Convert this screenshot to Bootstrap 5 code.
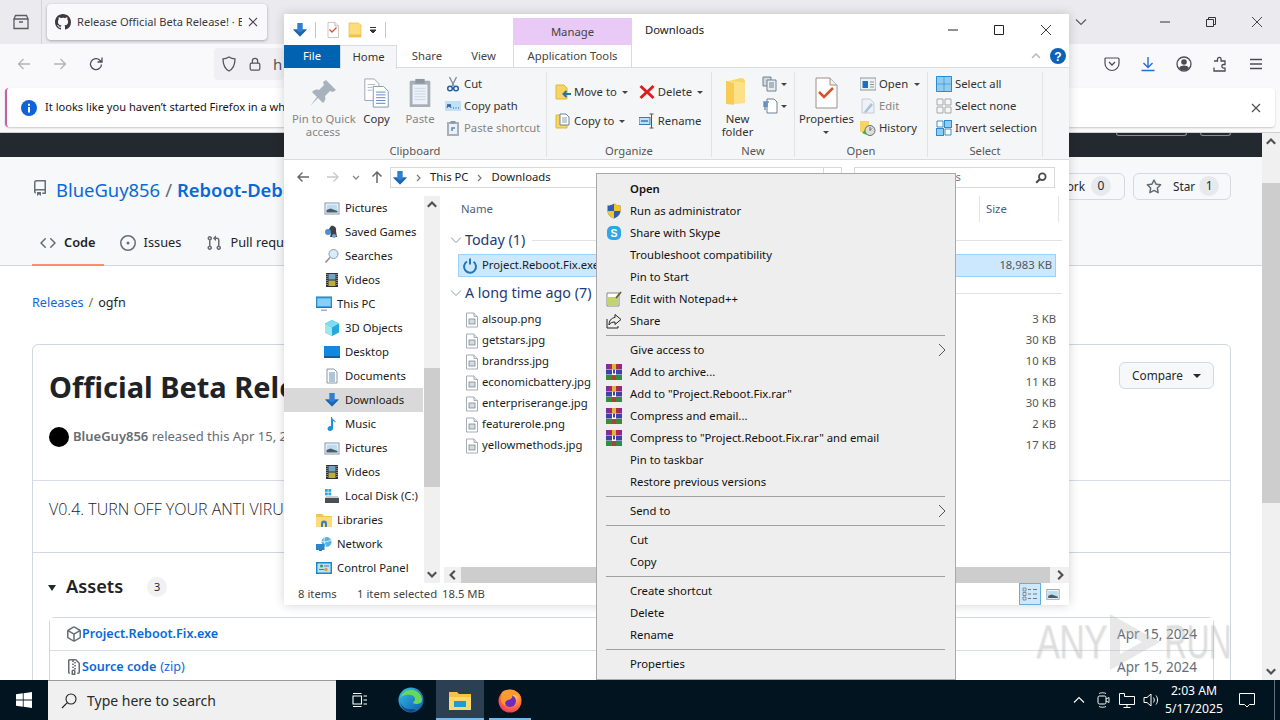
<!doctype html>
<html lang="en"><head><meta charset="utf-8"><title>Downloads</title>
<link href="https://cdn.jsdelivr.net/npm/bootstrap@5.3.0/dist/css/bootstrap.min.css" rel="stylesheet">
<style>
:root{--ui:"Noto Sans","Open Sans",sans-serif}
html,body{height:720px;overflow:hidden}
body{font-family:var(--ui);font-size:14px;color:#1f2328;background:#fff;position:relative;width:1280px}
svg{display:block;flex:none}
.svgdefs{position:absolute}
.h44{height:44px}
/* browser */
.ff{height:680px;overflow:hidden;background:#fff}
.ff-tabs{height:44px;background:#ebebef}
.ff-ic-slot{width:42px;border-right:1px solid #d4d4d8;height:44px}
.ff-tab{margin:4px 0 4px 5px;width:220px;height:36px;background:#f9f9fb;border-radius:4px;box-shadow:0 1px 3px rgba(0,0,0,.3);padding:0 8px;font-size:11.1px;color:#3a3a40;white-space:nowrap;overflow:hidden}
.ff-tab-title{width:167px;overflow:hidden;margin-left:6px;margin-right:5px}
.ff-chev{margin-left:799px;width:30px}
.ff-win{width:46px}
.ff-bar{height:44px;background:#f9f9fb;padding-bottom:4px}
.ff-btn{width:36px}
.ff-btn2{margin-left:2px}
.ff-url{margin-left:100px;height:32px;width:70px;background:#f0f0f4;border-radius:4px;padding-left:7px;gap:11px;color:#55555c;font-size:15px}
.ff-right{margin-left:auto;padding-right:6px;gap:0}
.ff-right span{width:36px;display:flex;justify-content:center}
.ff-notebar{height:45px;background:#f9f9fb;padding:0 5px;border-bottom:1px solid #cfcfd8}
.ff-note{height:39px;background:#fff;border-radius:4px;box-shadow:0 1px 2px rgba(0,0,0,.2);border-left:2px solid #c85fa0;padding-left:14px;padding-right:13px;font-size:11.1px;white-space:nowrap;color:#15141a}
.ff-note-txt{margin-left:8px}
.gh{height:547px}
.gh-main{width:1262px;overflow:hidden}
.gh-dark{height:24px;background:#24292f;gap:13px;padding-right:31px}
.gh-dark span{height:3px;border:1px solid #8b8f94;border-top:0;border-radius:0 0 4px 4px}
.gh-d1{width:71px}.gh-d2{width:31px}
.gh-head{height:109px;background:#f6f8fa;border-bottom:1px solid #d0d7de}
.gh-top{height:60px;padding:16px 31px 0 32px}
.gh-repo-ic{margin-top:7px}
.gh-repo{font-size:18.4px;white-space:nowrap;margin:3px 0 0 8px;color:#0969da}
.gh-repo a{color:#0969da;text-decoration:none}
.gh-repo b{font-weight:600}
.gh-repo i{color:#656d76;font-style:normal;margin:0 5px}
.gh-btn{height:27px;background:#f6f8fa;border:1px solid #d5d9de;border-radius:6px;font-size:11.8px;color:#24292f;padding:0;position:relative}
.gh-fork{width:80px;margin-left:auto;padding-right:13px;gap:6px}
.gh-star{width:98px;margin-left:8px;padding-left:12px}
.gh-star-t{margin:0 4px 0 11px}
.gh-count{background:#e7eaed;color:#24292f;font-weight:400;font-size:12px;width:20px;height:20px;padding:0;line-height:20px;border-radius:10px}
.gh-tabs{padding-left:32px;gap:8px;height:49px;margin:0}
.gh-tab{height:49px;padding:3px 8px 0;gap:8px;color:#1f2328;font-size:12.8px;white-space:nowrap}
.gh-tab.on{font-weight:600;border-bottom:2px solid #fd8c73;padding-top:5px}
.gh-tab.pr{margin-left:1px}
.gh-crumb{margin:27px 0 0 32px;height:20px;line-height:20px;font-size:12.6px;color:#1f2328}
.gh-crumb a{color:#0969da;text-decoration:none}
.gh-crumb i{color:#656d76;font-style:normal;margin:0 5px}
.gh-card{width:1199px;margin:31px 0 0 32px;border:1px solid #d0d7de;border-radius:6px;display:block;background:#fff;height:500px}
.gh-titlebar{height:44px;margin:20px 16px 0 16px}
.gh-title{font-size:29px;font-weight:700;margin:0;line-height:44px;color:#1f2328;white-space:nowrap}
.gh-cmp{width:95px;height:27px;background:#f6f8fa;border:1px solid #d5d9de;border-radius:6px;font-size:11.8px;margin:-3px 0 0 auto;padding:0 10px;color:#24292f;gap:10px}
.gh-cmp::after{content:"";border:4px solid transparent;border-top-color:#24292f;border-bottom:0}
.gh-author{height:24px;margin:16px 16px 0;font-size:13px;color:#656d76;white-space:nowrap}
.gh-av{width:20px;height:20px;background:#000;border-radius:50%;margin-right:4px}
.gh-author b{font-weight:600}
.gh-rule{margin:31px 16px 0;border-top:1px solid #d8dee4;opacity:1}
.gh-body{margin:16px 16px 0;height:24px;line-height:24px;font-size:16px;font-weight:300;color:#1f2328;white-space:nowrap;font-family:"Open Sans",sans-serif}
.gh-sect{border-top:1px solid #d0d7de;margin-top:31px;padding:20px 16px 0}
.gh-assets{height:28px}
.gh-tri{width:0;height:0;border:4px solid transparent;border-top:6px solid #24292f;border-bottom:0;margin:1px 10px 0 -1px}
.gh-assets b{font-size:18.2px;font-weight:600;margin-right:24px}
.gh-assets .gh-count{font-size:11px;background:#eff1f3}
.gh-list{margin-top:16px;border:1px solid #d0d7de;border-radius:6px}
.gh-row{height:33px;padding:0 16px;gap:0;font-size:12.6px;border-bottom:1px solid #d8dee4;background:#fff}
.gh-row a{color:#0969da;font-weight:600;text-decoration:none;white-space:nowrap}
.gh-zip{color:#0969da;margin-left:4px}
.gh-date{margin-left:auto;color:#656d76;font-size:13.6px}
.gh-sb{width:18px;background:#f0f0f0}
.gh-sb-up{height:18px}
.gh-thumb{height:320px;background:#cdcdcd;margin-top:32px}
.gh-sb-dn{margin-top:auto;height:18px}
.wm{left:1036px;top:609px;width:200px;height:66px;color:rgba(195,195,195,.32);font:48px/66px "Liberation Sans",sans-serif;letter-spacing:-1px;white-space:nowrap;text-shadow:1px 1px 2px rgba(150,150,150,.2);z-index:5;pointer-events:none}
.wm span{display:inline-block;transform:scaleX(.74);transform-origin:left}
.wm svg{position:absolute;left:68px;top:1px}
.wm .r{position:absolute;left:128px;top:0;transform:scaleX(.66)}
/* explorer */
.xp{left:284px;top:14px;width:785px;height:591px;background:#fff;font-size:11.3px;color:#1b1b1b;box-shadow:0 0 10px rgba(0,0,0,.18);z-index:2;white-space:nowrap}
.xp-title{height:31px}
.xp-qa{width:229px;padding-left:8px;gap:0}
.xp-vsep{width:1px;height:16px;background:#c6c6c6}
.q1{margin:0 9px 0 7px}.q2{margin-left:7px}.q3{margin-left:7px}.q4{margin-left:8px}
.xp-manage{width:119px;height:27px;margin-top:4px;background:#e9c9f6;text-align:center;line-height:27px;color:#444}
.xp-doc{padding:1px 0 0 13px;color:#1b1b1b}
.xp-wb{width:46.5px;height:31px}
.xp-tabs{height:23px;border-bottom:1px solid #dadbdc;line-height:22px;position:relative}
.xp-tab{text-align:center;color:#444}
.xp-file{width:56px;background:#0063b1;color:#fff;height:23px}
.xp-home{width:57px;height:24px;background:#f5f6f7;border:1px solid #dadbdc;border-bottom:0;z-index:1;margin-top:0;color:#333}
.xp-share{width:60px}.xp-view{width:53px;margin-right:3px}
.xp-app{width:119px;border-left:1px solid #dadbdc;border-right:1px solid #dadbdc}
.xp-help{margin-left:auto;padding-right:3px;gap:8px}
.xp-rib{height:92px;background:#f5f6f7;border-bottom:1px solid #dadbdc;color:#333}
.xp-grp{position:relative;border-right:1px solid #e2e3e4;margin:4px 0 2px;height:85px;padding-top:0}
.xp-grp-c{height:68px}
.xp-lbl{position:absolute;left:0;right:0;bottom:-1px;text-align:center;line-height:14px;color:#565656;font-size:11.2px}
.g1{width:263px;padding-left:8px}.g2{width:165px;padding-left:8px}.g3{width:83px}.g4{width:133px}.g5{width:115px}
.big{padding-top:2px;text-align:center;line-height:13px}
.big svg{margin:0 auto}
.big-ic{height:38px;display:flex;align-items:center;justify-content:center}
.dis{color:#858585}
.w62{width:62px}.w44{width:45px}.w42{width:42px}.w41{width:41px}.w53{width:53px}
.smalls{margin-left:4px;padding-top:1px}
.smalls>div{height:22px;gap:3px}
.smalls .sic{width:16px;display:flex;justify-content:center}
.sm-new{margin-left:4px}
.sm-new>div{gap:0}
.g3p{padding-left:5px}
.cr{width:0;height:0;border:3px solid transparent;border-top:3px solid #444;border-bottom:0;display:inline-block;margin-left:3px;vertical-align:2px}
.org{padding-top:5.5px;gap:11px}
.org-col>div{height:29px;gap:2px}
.org-col svg{margin-right:1px}
.xp-addr{height:32px;padding-top:7px;padding-left:4px}
.xp-nav-ic{width:30px;display:flex;justify-content:center;height:16px;margin-top:3px}
.xp-nav-c{width:16px}.xp-nav-u{width:26px}
.xp-addrbox{width:452px;height:21px;border:1px solid #d9d9d9;padding-left:1px;gap:0;justify-content:flex-start}
.xp-addrdiv{margin-left:auto;width:18px;height:19px;border-left:1px solid #d9d9d9}
.xp-srch{margin-left:12px;width:201px;height:21px;border:1px solid #d9d9d9;padding:0 6px 0 8px;color:#777}
.xp-sep{color:#777;margin:0 9px 0 8px}
.xp-sep1{margin:0 8px}
.xp-body{height:391px}
.xp-pane{width:156px;padding-top:4px}
.xp-list{width:140px;overflow:hidden}
.xp-it{height:24px;gap:5px;padding-left:40px;overflow:hidden;width:139px}
.xp-it.l1{padding-left:32px}
.xp-it svg{width:16px;height:16px}
.xp-it.sel{background:#d9d9d9}
.xp-vs{width:16px;background:#f0f0f0;height:387px}
.xp-vs-a{height:18px;display:flex;align-items:center;justify-content:center}
.xp-vs-t{height:119px;background:#cdcdcd;margin-top:154px}
.xp-vs-b{margin-top:auto;height:18px;display:flex;align-items:center;justify-content:center}
.xp-cnt{width:628px;margin-left:1px;padding-top:4px}
.xp-hdr{height:26px;color:#4c607a}
.xp-hn{width:538px;padding-left:20px}
.xp-hs{width:80px;height:26px;border-left:1px solid #e5e5e5;border-right:1px solid #e5e5e5;padding-left:6px}
.xp-g{height:24px;margin-top:6px;padding-left:10px;font-size:14.3px;color:#1e3a78;gap:4px}
.xp-g::after{content:"";flex:1;height:1px;background:#e2e2e2;margin:0 7px 0 3px}
.xp-gs{margin-top:4px;height:24px}
.xp-row{height:21px;margin-left:22px;width:596px;padding-left:1px}
.xp-row .n{margin-left:2px;flex:1}
.xp-row .s{margin-right:3px;color:#555}
.xp-row.sel{height:23px;background:#cce8ff;border:1px solid #99d1ff;margin-left:17px;width:598px;margin-top:2px;padding-left:3px}
.xp-row.sel .n{margin-left:4px}
.xp-row.first{margin-top:4px}
.xp-hsb{height:16px;margin-top:auto;margin-left:3px;background:#f0f0f0}
.xp-hsb-a{width:17px;display:flex;align-items:center;justify-content:center}
.xp-hsb-t{flex:1;background:#cdcdcd}
.xp-hsb-b{width:19px;display:flex;align-items:center;justify-content:center}
.xp-stat{height:22px;color:#444;padding-left:14px}
.xp-stat .a{width:59px}.xp-stat .b{width:85px}
.xp-views{margin-left:auto;padding-right:6px;gap:0}
.xp-v1{width:22px;height:22px;background:#cce8ff;border:1px solid #60b0e0;display:flex;align-items:center;justify-content:center;margin-right:2px}
.xp-v2{width:20px;display:flex;justify-content:center}
/* menu */
.ctx.dropdown-menu{left:596px;top:173px;width:360px;height:507px;margin:0;padding:4px 0 0;background:#eeeeee;border:1px solid #a9a9a9;border-radius:0;z-index:4;display:block;min-width:0}
.ctx .dropdown-item{height:22px;padding:0 0 0 5px;color:#111;background:transparent;font-size:11.3px;white-space:nowrap}
.ctx .dropdown-divider{margin:3px 10px 3px 9px;border-top:1px solid #a0a0a0;opacity:1}
.ctx-ic{width:24px;margin-right:4px;display:flex;justify-content:center}
.ctx .arr{margin-left:auto;margin-right:9px}
.ctx b{font-weight:600}
/* taskbar */
.tb{height:40px;background:#02141f;position:relative;z-index:6}
.tb-start{width:48px}
.tb-search{width:288px;height:40px;background:#f0f0f0;border-top:1px solid #9a9a9a;padding-left:13px;gap:10px;font-size:14px;color:#2a2a2a;font-family:var(--ui)}
.tb-app{width:48px;height:40px;position:relative}
.tb-a1{margin-left:3px}.tb-a2{margin-left:1px}.tb-a3{margin-left:2px}
.tb-act{background:#2b4153}
.tb-run::after{content:"";position:absolute;left:0;right:0;bottom:0;height:2px;background:#76b9ed}
.tb-run2::after{content:"";position:absolute;left:3px;right:3px;bottom:0;height:2px;background:#76b9ed}
.tb-view{margin-left:0;width:48px}
.tb-tray{margin-left:auto;gap:0}
.tb-s{width:24px;display:flex;justify-content:center}
.tb-clock{width:62px;text-align:center;color:#fff;font-size:12.2px;line-height:18px}
.tb-note{width:48px;display:flex;justify-content:center;margin:0 3px 0 -2px}
.tb-line{width:6px;height:40px;border-left:1px solid #667079}
</style></head>
<body>
<svg width="0" height="0" class="svgdefs">
<defs>
<symbol id="dn" viewBox="0 0 16 16"><path d="M5.300 1h5.400v6.500h4.200L8 14.500 1.100 7.500h4.200z" fill="#2f80d0"/><path d="M8 14.500 1.100 7.500h4.200V9q2.700 2 5.400 0V7.500h4.200z" fill="#1e66b0"/></symbol>
<symbol id="file" viewBox="0 0 16 16"><path d="M2.500 1h7.500l3.500 3.500V15H2.500z" fill="#fff" stroke="#a5adb5"/><path d="M10 1v3.500h3.500" fill="#e6e9ec" stroke="#a5adb5"/><rect x="5" y="7" width="6" height="5" fill="#d5dce0" stroke="#7e8890" stroke-width=".8"/></symbol>
<symbol id="pic" viewBox="0 0 16 16"><rect x="1" y="3" width="14" height="11" fill="#fff" stroke="#7f98ad"/><rect x="2.500" y="4.500" width="11" height="8" fill="#bcdcf0"/><path d="M2.500 12.500v-2.500l4-1.500 7 2.500v1.500z" fill="#4a5c66"/></symbol>
<symbol id="games" viewBox="0 0 16 16"><path d="M7 2c3-1 6 2 5 5l1 6H6l1-4-2 1-2-2z" fill="#3d4248"/><circle cx="4" cy="8" r="3" fill="#4a90d0"/><circle cx="10" cy="12" r="2" fill="#7aa7d0"/></symbol>
<symbol id="srch" viewBox="0 0 16 16"><circle cx="9.500" cy="6" r="4.500" fill="#d9ecfa" stroke="#8a9cab"/><path d="M6 9.500 1.500 14.500" stroke="#8d8d8d" stroke-width="1.500"/></symbol>
<symbol id="vid" viewBox="0 0 16 16"><rect x="2" y="1" width="12" height="14" fill="#333"/><rect x="4.500" y="2" width="7" height="5.500" fill="#6fa3c7"/><rect x="4.500" y="8.500" width="7" height="5.500" fill="#b8b046"/><path d="M3 2v12M13 2v12" stroke="#ccc" stroke-dasharray="1 1"/></symbol>
<symbol id="pc" viewBox="0 0 16 16"><rect x="0" y="1" width="16" height="10.500" fill="#3aa4e6" stroke="#1b79b8"/><rect x="1.500" y="2.500" width="13" height="7.500" fill="#86d0f7"/><path d="M5 13.500h6v1.500H5z" fill="#9bb3c4"/></symbol>
<symbol id="cube" viewBox="0 0 16 16"><path d="M8 0l7 3.500v9L8 16l-7-3.500v-9z" fill="#25a9dc"/><path d="M8 7.500 1 3.500 8 0l7 3.500z" fill="#7fdcf2"/><path d="M1 3.500 8 7.500V16l-7-3.500z" fill="#9ee7ee"/></symbol>
<symbol id="desk" viewBox="0 0 16 16"><rect x="0" y="2" width="16" height="12" fill="#1289dc"/><path d="M0 12h16v2H0z" fill="#0a5fa8"/></symbol>
<symbol id="doc" viewBox="0 0 16 16"><path d="M3 1h7l3 3v11H3z" fill="#fff" stroke="#8d98a3"/><path d="M5 5h6M5 7h6M5 9h6M5 11h6M5 13h6" stroke="#5a8db5"/></symbol>
<symbol id="note" viewBox="0 0 16 16"><path d="M8 1c0 3 4 3 4 6 0-1-2-2-3-2v7.500c0 1.600-1.500 2.500-3 2.500s-2.500-1-2.500-2.200S5 10 6 10c.6 0 1 .1 1 .3V1z" fill="#1e8fdc"/></symbol>
<symbol id="disk" viewBox="0 0 16 16"><rect x="1" y="10" width="14" height="5" fill="#4a4f55"/><path d="M2 8h12l1 2H1z" fill="#c9ced2"/><rect x="1" y="1" width="2.800" height="2.800" fill="#28a8e0"/><rect x="4.400" y="1" width="2.800" height="2.800" fill="#28a8e0"/><rect x="1" y="4.500" width="2.800" height="2.800" fill="#28a8e0"/><rect x="4.400" y="4.500" width="2.800" height="2.800" fill="#28a8e0"/></symbol>
<symbol id="lib" viewBox="0 0 16 16"><path d="M0 2h6l2 2h8v11H0z" fill="#f3c64f"/><path d="M0 5h16v10H0z" fill="#fbdc7a"/><path d="M5 15v-3.500a3 3 0 0 1 6 0V15H9v-3a1 1 0 0 0-2 0v3z" fill="#3d7fc0"/></symbol>
<symbol id="net" viewBox="0 0 16 16"><circle cx="10.500" cy="6" r="5" fill="#57b3e6"/><path d="M6 5.500c3 1 6 0 9-1.500M9 1c-2 3 0 7 1 10" stroke="#d9f0fb" fill="none"/><rect x="0" y="8" width="8.500" height="6" fill="#2b86c9"/><path d="M3 14.500h3" stroke="#666"/></symbol>
<symbol id="cp" viewBox="0 0 16 16"><rect x="0" y="2" width="16" height="12" fill="#1f88c9"/><rect x="1.500" y="3.500" width="13" height="9" fill="#bfe2f3"/><circle cx="5.500" cy="6" r="1.500" fill="#2f9e5a"/><circle cx="10" cy="9.500" r="1.700" fill="#e0a030"/><path d="M3 9.500h5M8 6h5" stroke="#3a7fb8"/></symbol>
<symbol id="chev-up" viewBox="0 0 10 10"><path d="M1.500 6.500 5 3l3.500 3.500" fill="none" stroke="#505050" stroke-width="1.800"/></symbol>
<symbol id="chev-dn" viewBox="0 0 10 10"><path d="M1.500 3.500 5 7l3.500-3.500" fill="none" stroke="#505050" stroke-width="1.800"/></symbol>
<symbol id="chev-l" viewBox="0 0 10 10"><path d="M6.500 1.500 3 5l3.500 3.500" fill="none" stroke="#505050" stroke-width="1.800"/></symbol>
<symbol id="chev-r" viewBox="0 0 10 10"><path d="M3.500 1.500 7 5 3.500 8.500" fill="none" stroke="#505050" stroke-width="1.800"/></symbol>
<symbol id="rar" viewBox="0 0 16 16"><rect x="0" y="0" width="16" height="5" fill="#b02a4a"/><rect x="0" y="5.500" width="16" height="5" fill="#4040a8"/><rect x="0" y="11" width="16" height="5" fill="#2f8f3f"/><rect x="0" y="0" width="3" height="5" fill="#7a2f9e"/><rect x="13" y="0" width="3" height="5" fill="#7a2f9e"/><path d="M6 5.500h1v4h2v-4h1v5.500H6z" fill="#fff"/><rect x="6" y="0" width="4" height="5" fill="#d8b840"/><rect x="6" y="11.500" width="4" height="4.500" fill="#b04030"/></symbol>
<symbol id="shield" viewBox="0 0 16 16"><path d="M8 .5c2 1.500 4 2 6.500 2V8c0 3.500-3 6-6.500 7.500C4.500 14 1.500 11.500 1.500 8V2.500c2.500 0 4.500-.5 6.500-2z" fill="#2c5fb0"/><path d="M8 .5c2 1.500 4 2 6.500 2V8H8zM8 8v7.500C4.500 14 1.500 11.500 1.500 8z" fill="#f5c522"/></symbol>
<symbol id="paper" viewBox="0 0 32 32"><path d="M6 1h14l7 7v23H6z" fill="#fff" stroke="#a08e8a"/><path d="M20 1v7h7" fill="#eee" stroke="#a08e8a"/><path d="M9 15l5 5 9-9" fill="none" stroke="#d5532c" stroke-width="2.500"/></symbol>
<symbol id="pin" viewBox="0 0 32 32"><path d="M19 3l10 10-3 2-3-1-5 5c1 3 0 5-2 7l-5-5-8 8 7-9-5-5c2-2 4-3 7-2l5-5-1-3z" fill="#a8b2bd"/></symbol>
<symbol id="copy" viewBox="0 0 32 32"><path d="M3 1h10l5 5v18H3z" fill="#fff" stroke="#9aa4ae"/><path d="M12 9h11l5 5v17H12z" fill="#fff" stroke="#7e96b0"/><path d="M15 15h10M15 18h10M15 21h10M15 24h10M15 27h10" stroke="#4f87c0"/><path d="M6 7h8M6 10h5M6 13h5" stroke="#b0b8c0"/></symbol>
<symbol id="paste" viewBox="0 0 32 32"><rect x="5" y="3" width="22" height="28" rx="1" fill="#a7afb8"/><rect x="8" y="7" width="16" height="21" fill="#eef2f8"/><rect x="11" y="1" width="10" height="5" fill="#8e97a0"/><path d="M10 11h12M10 14h12M10 17h12M10 20h12M10 23h12" stroke="#c8d4e2"/></symbol>
<symbol id="cut" viewBox="0 0 16 16"><path d="M4.500 1 9 10M11.500 1 7 10" stroke="#7e8a96" stroke-width="1.300"/><circle cx="5" cy="12.500" r="2.300" fill="none" stroke="#1f5fa8" stroke-width="1.500"/><circle cx="11" cy="12.500" r="2.300" fill="none" stroke="#1f5fa8" stroke-width="1.500"/></symbol>
<symbol id="cpath" viewBox="0 0 16 16"><rect x="0" y="3" width="16" height="10" fill="#bfe0f5"/><path d="M2 10l1-4 1 3 1-3 1 4M8 10h1M10.500 10h1M13 10h1" stroke="#2c5f95" fill="none"/></symbol>
<symbol id="pshort" viewBox="0 0 16 16"><rect x="2" y="2" width="12" height="14" fill="#a6b0ba"/><rect x="4" y="4" width="8" height="10" fill="#eaf0f6"/><rect x="5.500" y="1" width="5" height="2.500" fill="#8e97a0"/><path d="M7 11V8h3" fill="none" stroke="#5b87b0" stroke-width="1.500"/></symbol>
<symbol id="moveto" viewBox="0 0 16 16"><path d="M1 1h8l3 3v11H1z" fill="#f7d565" stroke="#e0b83c"/><path d="M16 10H9M11.500 7 8.500 10l3 3" fill="none" stroke="#2d6fb5" stroke-width="2"/></symbol>
<symbol id="copyto" viewBox="0 0 16 16"><path d="M1 2h11v13H1z" fill="#f7d565" stroke="#e0b83c"/><path d="M5 1h6l3 3v8H5z" fill="#fff" stroke="#6e8195"/><path d="M7 5h5M7 7h5M7 9h5" stroke="#8aa0b5"/></symbol>
<symbol id="del" viewBox="0 0 16 16"><path d="M2.500 1 8 6.200 13.500 1 15.500 3 10.200 8l5.300 5-2 2L8 9.800 2.500 15l-2-2 5.300-5L.5 3z" fill="#e01c1c"/></symbol>
<symbol id="ren" viewBox="0 0 16 16"><rect x="0" y="4.500" width="11" height="7" fill="#bfdff2" stroke="#3a7ab5"/><path d="M2 8h7" stroke="#3a7ab5" stroke-width="1.500"/><path d="M12.500 1v14M10.500 1h4M10.500 15h4" stroke="#555" fill="none"/></symbol>
<symbol id="folder32" viewBox="0 0 32 32"><path d="M7 4 19 1c3 0 4 2 4 4v21l-16 1z" fill="#f7d566"/><path d="M4 4h4l11 1 4 1v20l-19 1z" fill="#fde189"/><path d="M4 4l8 2v22l-8-1z" fill="#f3c33f" opacity=".7"/></symbol>
<symbol id="folderq" viewBox="0 0 14 16"><path d="M1 1h9l3 2v12H1z" fill="#fcdc7e" stroke="#e9c44e" stroke-width=".8"/><path d="M1 12.500h12V15H1z" fill="#efc34a"/></symbol>
<symbol id="newi" viewBox="0 0 16 16"><path d="M1 1h8v9H1z" fill="#cfd8e0" stroke="#6f8293"/><path d="M5 4h9v11H5z" fill="#e8edf2" stroke="#6f8293"/><path d="M7 7h5M7 9h5M7 11h5" stroke="#6f8293"/></symbol>
<symbol id="easy" viewBox="0 0 16 16"><path d="M5 1h7l3 3v11H5z" fill="#fff" stroke="#6f8293"/><path d="M1 4h6M1 6h5M1 8h5M3 4v8" stroke="#2d6fb5" fill="none"/></symbol>
<symbol id="open" viewBox="0 0 16 16"><rect x="0" y="2" width="16" height="12" fill="#eef2f5" stroke="#8b96a0"/><rect x="2.500" y="5" width="5.500" height="7" fill="#1d6fc0"/><path d="M10 6h4M10 8.500h4M10 11h4" stroke="#8b96a0"/></symbol>
<symbol id="edit" viewBox="0 0 16 16"><path d="M2 1h8l4 4v10H2z" fill="#eef1f5" stroke="#c5ccd3"/><path d="M4 14 11 5l2 2-7 8z" fill="#a8c2dc"/></symbol>
<symbol id="hist" viewBox="0 0 16 16"><path d="M0 1h9v11H0z" fill="#f7d565"/><circle cx="10" cy="10.500" r="5" fill="#ddd" stroke="#6b6b6b"/><path d="M10 7v3.500l2-2" fill="none" stroke="#666"/><path d="M2 13l3-3 2 5z" fill="#4cae3a"/></symbol>
<symbol id="sall" viewBox="0 0 16 16"><rect x="0" y="0" width="7.500" height="7.500" fill="#8fcdf0"/><rect x="8.500" y="0" width="7.500" height="7.500" fill="#8fcdf0"/><rect x="0" y="8.500" width="7.500" height="7.500" fill="#8fcdf0"/><rect x="8.500" y="8.500" width="7.500" height="7.500" fill="#8fcdf0"/><path d="M.5.500h15v15H.5zM8 0v16M0 8h16" fill="none" stroke="#2b8ad0"/></symbol>
<symbol id="snone" viewBox="0 0 16 16"><path d="M1 1h6v6H1zM9 1h6v6H9zM1 9h6v6H1zM9 9h6v6H9z" fill="none" stroke="#a8a8a8"/></symbol>
<symbol id="sinv" viewBox="0 0 16 16"><path d="M1 1h6v6H1zM9 9h6v6H9z" fill="#fff" stroke="#3a90cc"/><rect x="8.500" y=".5" width="7" height="7" fill="#8fcdf0" stroke="#2b8ad0"/><rect x=".5" y="8.500" width="7" height="7" fill="#8fcdf0" stroke="#2b8ad0"/></symbol>
<symbol id="mag" viewBox="0 0 16 16"><circle cx="9.500" cy="6.500" r="3.800" fill="none" stroke="#4a4a4a" stroke-width="2"/><path d="M6.500 9.500 2.500 13.500" stroke="#4a4a4a" stroke-width="2.500"/></symbol>
<symbol id="spin" viewBox="0 0 16 16"><path d="M5 3.500a6 6 0 1 0 6.500.3" fill="none" stroke="#2176b8" stroke-width="2"/><path d="M8 .5v6" stroke="#2176b8" stroke-width="2"/></symbol>
<symbol id="gh-mark" viewBox="0 0 16 16"><path fill="#3a3a40" d="M8 0C3.580 0 0 3.580 0 8c0 3.540 2.290 6.530 5.470 7.590.4.070.55-.17.55-.38 0-.19-.01-.82-.01-1.490-2.010.37-2.530-.49-2.690-.94-.09-.23-.48-.94-.82-1.130-.28-.15-.68-.52-.01-.53.63-.01 1.080.58 1.230.82.72 1.210 1.870.87 2.330.66.070-.52.28-.87.51-1.070-1.780-.2-3.640-.89-3.640-3.950 0-.87.31-1.590.82-2.150-.08-.2-.36-1.020.08-2.120 0 0 .67-.21 2.200.82.64-.18 1.320-.27 2-.27.68 0 1.360.09 2 .27 1.530-1.040 2.200-.82 2.200-.82.44 1.100.16 1.920.08 2.120.51.56.82 1.270.82 2.150 0 3.070-1.870 3.750-3.650 3.950.29.25.54.73.54 1.480 0 1.070-.01 1.930-.01 2.200 0 .21.15.46.55.38A8.013 8.013 0 0016 8c0-4.420-3.580-8-8-8z"/></symbol>
</defs></svg>

<div class="ff d-flex flex-column">
  <div class="ff-tabs d-flex align-items-start">
    <div class="ff-ic-slot d-flex align-items-center justify-content-center"><svg width="16" height="16" viewBox="0 0 16 16"><path d="M1 5h14v9.500H1zM2.500 1.500h11L15 5H1zM6 8h4" fill="none" stroke="#5b5b66" stroke-width="1.300"/></svg></div>
    <div class="ff-tab d-flex align-items-center"><svg width="16" height="16"><use href="#gh-mark"/></svg><span class="ff-tab-title">Release Official Beta Release! · E</span><svg width="12" height="12" viewBox="0 0 12 12"><path d="M2 2l8 8M10 2l-8 8" stroke="#4b4b52" stroke-width="1.100"/></svg></div>
    <div class="ff-chev d-flex align-items-center justify-content-center h44"><svg width="14" height="14" viewBox="0 0 14 14"><path d="M2 4.500l5 5 5-5" fill="none" stroke="#5b5b66" stroke-width="1.200"/></svg></div>
    <div class="ff-win d-flex align-items-center justify-content-center ms-auto h44"><svg width="12" height="12" viewBox="0 0 12 12"><path d="M1 6h10" stroke="#333" stroke-width="1"/></svg></div>
    <div class="ff-win d-flex align-items-center justify-content-center h44"><svg width="12" height="12" viewBox="0 0 12 12"><path d="M1.500 3.500h7v7h-7zM3.500 3.500v-2h7v7h-2" fill="none" stroke="#333"/></svg></div>
    <div class="ff-win d-flex align-items-center justify-content-center h44"><svg width="12" height="12" viewBox="0 0 12 12"><path d="M1 1l10 10M11 1L1 11" stroke="#333" stroke-width=".9"/></svg></div>
  </div>
  <div class="ff-bar d-flex align-items-center">
    <span class="ff-btn d-flex justify-content-center ms-1 ps-1"><svg width="16" height="16" viewBox="0 0 16 16"><path d="M14 8H2.500M7.500 3 2.500 8l5 5" fill="none" stroke="#b4b4b8" stroke-width="1.300"/></svg></span>
    <span class="ff-btn ff-btn2 d-flex justify-content-center"><svg width="16" height="16" viewBox="0 0 16 16"><path d="M2 8h11.500M8.500 3l5 5-5 5" fill="none" stroke="#b4b4b8" stroke-width="1.300"/></svg></span>
    <span class="ff-btn d-flex justify-content-center"><svg width="16" height="16" viewBox="0 0 16 16"><path d="M13.500 8.500a5.500 5.500 0 1 1-1.600-4.300L14 6M14 1.500V6H9.500" fill="none" stroke="#4b4b52" stroke-width="1.300"/></svg></span>
    <div class="ff-url d-flex align-items-center"><svg width="16" height="16" viewBox="0 0 16 16"><path d="M8 1c2 1.300 4 1.800 6 1.800C14 9 12 13 8 15 4 13 2 9 2 2.800 4 2.800 6 2.300 8 1z" fill="none" stroke="#55555c" stroke-width="1.300"/></svg><svg width="14" height="14" viewBox="0 0 16 16"><rect x="2.500" y="7" width="11" height="8" rx="1.500" fill="none" stroke="#55555c" stroke-width="1.400"/><path d="M5 7V4.500a3 3 0 0 1 6 0V7" fill="none" stroke="#55555c" stroke-width="1.400"/></svg><span>h</span></div>
    <div class="ff-right d-flex align-items-center">
      <span><svg width="16" height="16" viewBox="0 0 16 16"><path d="M2 2h12c.6 0 1 .4 1 1v4.500A7 7 0 0 1 1 7.500V3c0-.6.4-1 1-1z" fill="none" stroke="#4b4b52" stroke-width="1.200"/><path d="M5 6l3 3 3-3" fill="none" stroke="#4b4b52" stroke-width="1.300"/></svg></span>
      <span><svg width="16" height="16" viewBox="0 0 16 16"><path d="M8 1v10M3.500 7 8 11.500 12.500 7M1.500 14.500h13" fill="none" stroke="#1f6fe0" stroke-width="1.400"/></svg></span>
      <span><svg width="16" height="16" viewBox="0 0 16 16"><circle cx="8" cy="8" r="7" fill="none" stroke="#4b4b52" stroke-width="1.300"/><circle cx="8" cy="6" r="2.800" fill="#4b4b52"/><path d="M3 12c1-2 3-2.600 5-2.600s4 .6 5 2.600l-2 2H5z" fill="#4b4b52"/></svg></span>
      <span><svg width="16" height="16" viewBox="0 0 16 16"><path d="M2 5h3.500V3.200a1.800 1.800 0 0 1 3.600 0V5H13v3.500h-1.400a1.800 1.800 0 0 0 0 3.600H13V15H2v-3.500" fill="none" stroke="#4b4b52" stroke-width="1.300"/></svg></span>
      <span><svg width="16" height="16" viewBox="0 0 16 16"><path d="M2 3.500h12M2 8h12M2 12.500h12" stroke="#4b4b52" stroke-width="1.300"/></svg></span>
    </div>
  </div>
  <div class="ff-notebar">
    <div class="ff-note d-flex align-items-center"><svg width="16" height="16" viewBox="0 0 16 16"><circle cx="8" cy="8" r="8" fill="#0f62d9"/><rect x="7" y="7" width="2" height="5.500" fill="#fff"/><rect x="7" y="3.800" width="2" height="2" fill="#fff"/></svg><span class="ff-note-txt">It looks like you haven’t started Firefox in a while. Do you want to clean it up for a fresh, like-new experience?</span><svg class="ms-auto" width="12" height="12" viewBox="0 0 12 12"><path d="M2 2l8 8M10 2l-8 8" stroke="#4b4b52" stroke-width="1.100"/></svg></div>
  </div>
  <div class="gh d-flex">
    <div class="gh-main">
      <div class="gh-dark d-flex justify-content-end"><span class="gh-d1"></span><span class="gh-d2"></span></div>
      <div class="gh-head">
        <div class="gh-top d-flex align-items-start">
          <svg class="gh-repo-ic" width="16" height="16" viewBox="0 0 16 16"><path fill="#656d76" d="M2 2.500A2.500 2.500 0 0 1 4.500 0h8.750a.75.75 0 0 1 .75.750v12.500a.75.75 0 0 1-.75.750h-2.500a.75.75 0 0 1 0-1.500h1.750v-2h-8a1 1 0 0 0-.714 1.700.75.75 0 1 1-1.072 1.050A2.495 2.495 0 0 1 2 11.500Zm10.500-1h-8a1 1 0 0 0-1 1v6.708A2.486 2.486 0 0 1 4.500 9h8ZM5 12.250a.25.25 0 0 1 .25-.25h3.500a.25.25 0 0 1 .25.250v3.250a.25.25 0 0 1-.4.2l-1.450-1.087a.249.249 0 0 0-.3 0L5.400 15.700a.25.25 0 0 1-.4-.2Z"/></svg>
          <div class="gh-repo"><a href="#">BlueGuy856</a><i>/</i><a href="#"><b>Reboot-Debugger</b></a></div>
          <button class="btn gh-btn gh-fork d-flex align-items-center justify-content-end"><span>Fork</span><span class="badge gh-count">0</span></button>
          <button class="btn gh-btn gh-star d-flex align-items-center"><svg width="16" height="16" viewBox="0 0 16 16"><path fill="#656d76" d="M8 .250a.75.75 0 0 1 .673.418l1.882 3.815 4.210.612a.75.75 0 0 1 .416 1.279l-3.046 2.970.719 4.192a.751.751 0 0 1-1.088.791L8 12.347l-3.766 1.980a.75.75 0 0 1-1.088-.790l.720-4.194L.818 6.374a.75.75 0 0 1 .416-1.280l4.210-.611L7.327.668A.75.75 0 0 1 8 .250Zm0 2.445L6.615 5.500a.75.75 0 0 1-.564.410l-3.097.450 2.240 2.184a.75.75 0 0 1 .216.664l-.528 3.084 2.769-1.456a.75.75 0 0 1 .698 0l2.770 1.456-.530-3.084a.75.75 0 0 1 .216-.664l2.240-2.183-3.096-.450a.75.75 0 0 1-.564-.410L8 2.694Z"/></svg><span class="gh-star-t">Star</span><span class="badge gh-count">1</span></button>
        </div>
        <ul class="nav gh-tabs">
          <li class="gh-tab on d-flex align-items-center"><svg width="16" height="16" viewBox="0 0 16 16"><path fill="#656d76" d="m11.280 3.220 4.250 4.250a.75.75 0 0 1 0 1.060l-4.250 4.250a.749.749 0 0 1-1.275-.326.749.749 0 0 1 .215-.734L13.940 8l-3.720-3.720a.749.749 0 0 1 .326-1.275.749.749 0 0 1 .734.215Zm-6.560 0a.751.751 0 0 1 1.042.018.751.751 0 0 1 .018 1.042L2.060 8l3.720 3.720a.749.749 0 0 1-.326 1.275.749.749 0 0 1-.734-.215L.470 8.530a.75.75 0 0 1 0-1.060Z"/></svg>Code</li>
          <li class="gh-tab d-flex align-items-center"><svg width="16" height="16" viewBox="0 0 16 16"><path fill="#656d76" d="M8 9.500a1.500 1.500 0 1 0 0-3 1.500 1.500 0 0 0 0 3Z"/><path fill="#656d76" d="M8 0a8 8 0 1 1 0 16A8 8 0 0 1 8 0ZM1.500 8a6.500 6.500 0 1 0 13 0 6.500 6.500 0 0 0-13 0Z"/></svg>Issues</li>
          <li class="gh-tab pr d-flex align-items-center"><svg width="16" height="16" viewBox="0 0 16 16"><path fill="#656d76" d="M1.500 3.250a2.250 2.250 0 1 1 3 2.122v5.256a2.251 2.251 0 1 1-1.500 0V5.372A2.250 2.250 0 0 1 1.500 3.250Zm5.677-.177L9.573.677A.25.25 0 0 1 10 .854V2.500h1A2.500 2.500 0 0 1 13.500 5v5.628a2.251 2.251 0 1 1-1.500 0V5a1 1 0 0 0-1-1h-1v1.646a.25.25 0 0 1-.427.177L7.177 3.427a.25.25 0 0 1 0-.354ZM3.750 2.500a.75.75 0 1 0 0 1.500.75.75 0 0 0 0-1.500Zm0 9.500a.75.75 0 1 0 0 1.500.75.75 0 0 0 0-1.500Zm8.250.750a.75.75 0 1 0 1.500 0 .75.75 0 0 0-1.500 0Z"/></svg>Pull requests</li>
        </ul>
      </div>
      <div class="gh-crumb"><a href="#">Releases</a><i>/</i>ogfn</div>
      <div class="card gh-card">
        <div class="gh-titlebar d-flex align-items-start"><h1 class="gh-title">Official Beta Release!</h1><button class="btn gh-cmp d-flex align-items-center justify-content-center">Compare</button></div>
        <div class="gh-author d-flex align-items-center"><span class="gh-av"></span><b>BlueGuy856</b>&nbsp;released this Apr 15, 2024</div>
        <hr class="gh-rule">
        <div class="gh-body">V0.4. TURN OFF YOUR ANTI VIRUS</div>
        <div class="gh-sect">
          <div class="gh-assets d-flex align-items-center"><span class="gh-tri"></span><b>Assets</b><span class="badge gh-count">3</span></div>
          <div class="gh-list">
            <div class="gh-row d-flex align-items-center"><svg width="16" height="16" viewBox="0 0 16 16"><path fill="#656d76" d="m8.878.392 5.250 3.045c.54.314.872.890.872 1.514v6.098a1.750 1.750 0 0 1-.872 1.514l-5.250 3.045a1.750 1.750 0 0 1-1.756 0l-5.250-3.045A1.750 1.750 0 0 1 1 11.049V4.951c0-.624.332-1.201.872-1.514L7.122.392a1.750 1.750 0 0 1 1.756 0ZM7.875 1.690l-4.630 2.685L8 7.133l4.755-2.758-4.630-2.685a.248.248 0 0 0-.25 0ZM2.500 5.677v5.372c0 .09.047.171.125.216l4.625 2.683V8.432Zm6.250 8.271 4.625-2.683a.25.25 0 0 0 .125-.216V5.677L8.750 8.432Z"/></svg><a href="#">Project.Reboot.Fix.exe</a><span class="gh-date">Apr 15, 2024</span></div>
            <div class="gh-row d-flex align-items-center"><svg width="16" height="16" viewBox="0 0 16 16"><path fill="#656d76" d="M3.500 1.750v11.500c0 .09.048.173.126.217a.75.75 0 0 1-.752 1.298A1.748 1.748 0 0 1 2 13.250V1.750C2 .784 2.784 0 3.750 0h5.586c.464 0 .909.185 1.237.513l2.914 2.914c.329.328.513.773.513 1.237v8.586A1.750 1.750 0 0 1 12.250 15h-.5a.75.75 0 0 1 0-1.500h.5a.25.25 0 0 0 .25-.25V4.664a.25.25 0 0 0-.073-.177L9.513 1.573a.25.25 0 0 0-.177-.073H7.250a.75.75 0 0 1 0 1.500h-.5a.75.75 0 0 1 0-1.500h-3a.25.25 0 0 0-.25.250Zm3.750 8.750h.5c.966 0 1.750.784 1.750 1.750v3a.75.75 0 0 1-.75.75h-2.500a.75.75 0 0 1-.75-.75v-3c0-.966.784-1.750 1.750-1.750ZM6 5.250a.75.75 0 0 1 .75-.75h.5a.75.75 0 0 1 0 1.500h-.5A.75.75 0 0 1 6 5.250Zm.75 2.250h.5a.75.75 0 0 1 0 1.500h-.5a.75.75 0 0 1 0-1.500ZM8 6.750A.75.75 0 0 1 8.750 6h.5a.75.75 0 0 1 0 1.500h-.5A.75.75 0 0 1 8 6.750ZM8.750 3h.5a.75.75 0 0 1 0 1.500h-.5a.75.75 0 0 1 0-1.500ZM8 9.750A.75.75 0 0 1 8.750 9h.5a.75.75 0 0 1 0 1.500h-.5A.75.75 0 0 1 8 9.750Zm-1 2.500v2.250h1v-2.250a.25.25 0 0 0-.25-.25h-.5a.25.25 0 0 0-.25.250Z"/></svg><a href="#">Source code</a><span class="gh-zip">(zip)</span><span class="gh-date">Apr 15, 2024</span></div>
          </div>
        </div>
      </div>
    </div>
    <div class="gh-sb d-flex flex-column align-items-center">
      <div class="gh-sb-up d-flex align-items-center"><svg width="12" height="12"><use href="#chev-up"/></svg></div>
      <div class="gh-thumb w-100"></div>
      <div class="gh-sb-dn d-flex align-items-center"><svg width="12" height="12"><use href="#chev-dn"/></svg></div>
    </div>
  </div>
</div>

<!-- Explorer window -->
<div class="xp position-absolute d-flex flex-column">
  <div class="xp-title d-flex">
    <div class="xp-qa d-flex align-items-center">
      <svg width="16" height="16"><use href="#dn"/></svg><span class="xp-vsep q1"></span>
      <svg width="16" height="16" viewBox="0 0 32 32"><use href="#paper"/></svg>
      <svg class="q2" width="14" height="16"><use href="#folderq"/></svg>
      <svg class="q3" width="8" height="8" viewBox="0 0 8 8"><path d="M1 1.500h6M1 4l3 3 3-3z" fill="#333" stroke="#333"/></svg>
      <span class="xp-vsep q4"></span>
    </div>
    <div class="xp-manage">Manage</div>
    <div class="xp-doc d-flex align-items-center flex-fill">Downloads</div>
    <div class="xp-wb d-flex align-items-center justify-content-center"><svg width="10" height="10" viewBox="0 0 10 10"><path d="M0 5h10" stroke="#222"/></svg></div>
    <div class="xp-wb d-flex align-items-center justify-content-center"><svg width="10" height="10" viewBox="0 0 10 10"><path d="M.5.500h9v9h-9z" fill="none" stroke="#222"/></svg></div>
    <div class="xp-wb d-flex align-items-center justify-content-center"><svg width="12" height="12" viewBox="0 0 12 12"><path d="M1 1l10 10M11 1L1 11" stroke="#222" stroke-width=".9"/></svg></div>
  </div>
  <div class="xp-tabs d-flex">
    <div class="xp-tab xp-file">File</div><div class="xp-tab xp-home">Home</div><div class="xp-tab xp-share">Share</div><div class="xp-tab xp-view">View</div><div class="xp-tab xp-app">Application Tools</div>
    <div class="xp-help d-flex align-items-center"><svg width="12" height="12" viewBox="0 0 12 12"><path d="M2 8l4-4 4 4" fill="none" stroke="#b8b8b8" stroke-width="1.500"/></svg><svg width="16" height="16" viewBox="0 0 16 16"><circle cx="8" cy="8" r="8" fill="#0a63b8"/><text x="8" y="12.500" text-anchor="middle" font-size="12" font-weight="700" fill="#fff" font-family="Liberation Sans">?</text></svg></div>
  </div>
  <div class="xp-rib d-flex">
    <div class="xp-grp g1"><div class="xp-grp-c d-flex">
      <div class="big w62 dis"><div class="big-ic"><svg width="32" height="32"><use href="#pin"/></svg></div>Pin to Quick<br>access</div>
      <div class="big w44"><div class="big-ic"><svg width="30" height="32"><use href="#copy"/></svg></div>Copy</div>
      <div class="big w42 dis"><div class="big-ic"><svg width="30" height="32"><use href="#paste"/></svg></div>Paste</div>
      <div class="smalls">
        <div class="d-flex align-items-center"><span class="sic"><svg width="16" height="16"><use href="#cut"/></svg></span>Cut</div>
        <div class="d-flex align-items-center"><span class="sic"><svg width="16" height="16"><use href="#cpath"/></svg></span>Copy path</div>
        <div class="d-flex align-items-center dis"><span class="sic"><svg width="16" height="16"><use href="#pshort"/></svg></span>Paste shortcut</div>
      </div></div><div class="xp-lbl">Clipboard</div></div>
    <div class="xp-grp g2"><div class="xp-grp-c d-flex org">
      <div class="org-col">
        <div class="d-flex align-items-center"><svg width="16" height="16"><use href="#moveto"/></svg>Move to<span class="cr"></span></div>
        <div class="d-flex align-items-center"><svg width="16" height="16"><use href="#copyto"/></svg>Copy to<span class="cr"></span></div>
      </div>
      <div class="org-col">
        <div class="d-flex align-items-center"><svg width="16" height="16"><use href="#del"/></svg>Delete<span class="cr"></span></div>
        <div class="d-flex align-items-center"><svg width="16" height="16"><use href="#ren"/></svg>Rename</div>
      </div></div><div class="xp-lbl">Organize</div></div>
    <div class="xp-grp g3"><div class="xp-grp-c d-flex g3p">
      <div class="big w41"><div class="big-ic"><svg width="32" height="32"><use href="#folder32"/></svg></div>New<br>folder</div>
      <div class="smalls sm-new">
        <div class="d-flex align-items-center"><svg width="16" height="16"><use href="#newi"/></svg><span class="cr"></span></div>
        <div class="d-flex align-items-center"><svg width="16" height="16"><use href="#easy"/></svg><span class="cr"></span></div>
      </div></div><div class="xp-lbl">New</div></div>
    <div class="xp-grp g4"><div class="xp-grp-c d-flex ps-1">
      <div class="big w53"><div class="big-ic"><svg width="32" height="32"><use href="#paper"/></svg></div>Properties<br><span class="cr m-0"></span></div>
      <div class="smalls ms-1 ps-1">
        <div class="d-flex align-items-center"><span class="sic"><svg width="16" height="16"><use href="#open"/></svg></span>Open<span class="cr"></span></div>
        <div class="d-flex align-items-center dis"><span class="sic"><svg width="16" height="16"><use href="#edit"/></svg></span>Edit</div>
        <div class="d-flex align-items-center"><span class="sic"><svg width="16" height="16"><use href="#hist"/></svg></span>History</div>
      </div></div><div class="xp-lbl">Open</div></div>
    <div class="xp-grp g5"><div class="xp-grp-c d-flex ps-2">
      <div class="smalls m-0">
        <div class="d-flex align-items-center"><span class="sic"><svg width="16" height="16"><use href="#sall"/></svg></span>Select all</div>
        <div class="d-flex align-items-center"><span class="sic"><svg width="16" height="16"><use href="#snone"/></svg></span>Select none</div>
        <div class="d-flex align-items-center"><span class="sic"><svg width="16" height="16"><use href="#sinv"/></svg></span>Invert selection</div>
      </div></div><div class="xp-lbl">Select</div></div>
  </div>
  <div class="xp-addr d-flex align-items-start">
    <span class="xp-nav-ic"><svg width="14" height="14" viewBox="0 0 14 14"><path d="M13 7H2M6.500 2.500 2 7l4.500 4.500" fill="none" stroke="#666" stroke-width="1.400"/></svg></span>
    <span class="xp-nav-ic"><svg width="14" height="14" viewBox="0 0 14 14"><path d="M1 7h11M7.500 2.500 12 7l-4.500 4.500" fill="none" stroke="#c8c8c8" stroke-width="1.400"/></svg></span>
    <span class="xp-nav-ic xp-nav-c"><svg width="10" height="14" viewBox="0 0 10 14"><path d="M2 6l3 3 3-3" fill="none" stroke="#888" stroke-width="1.300"/></svg></span>
    <span class="xp-nav-ic xp-nav-u"><svg width="14" height="14" viewBox="0 0 14 14"><path d="M7 13V2M2.500 6.500 7 2l4.500 4.500" fill="none" stroke="#666" stroke-width="1.500"/></svg></span>
    <div class="xp-addrbox d-flex align-items-center"><svg width="16" height="16"><use href="#dn"/></svg><span class="xp-sep xp-sep1"><svg width="6" height="8" viewBox="0 0 6 8"><path d="M1 1l3 3-3 3" fill="none" stroke="#777" stroke-width="1.200"/></svg></span>This PC<span class="xp-sep"><svg width="6" height="8" viewBox="0 0 6 8"><path d="M1 1l3 3-3 3" fill="none" stroke="#777" stroke-width="1.200"/></svg></span>Downloads<span class="xp-addrdiv"></span></div>
    <div class="xp-srch d-flex align-items-center justify-content-between"><span>Search Downloads</span><svg width="14" height="14"><use href="#mag"/></svg></div>
  </div>
  <div class="xp-body d-flex">
    <div class="xp-pane d-flex">
      <div class="xp-list">
        <div class="xp-it d-flex align-items-center"><svg><use href="#pic"/></svg>Pictures</div>
        <div class="xp-it d-flex align-items-center"><svg><use href="#games"/></svg>Saved Games</div>
        <div class="xp-it d-flex align-items-center"><svg><use href="#srch"/></svg>Searches</div>
        <div class="xp-it d-flex align-items-center"><svg><use href="#vid"/></svg>Videos</div>
        <div class="xp-it l1 d-flex align-items-center"><svg><use href="#pc"/></svg>This PC</div>
        <div class="xp-it d-flex align-items-center"><svg><use href="#cube"/></svg>3D Objects</div>
        <div class="xp-it d-flex align-items-center"><svg><use href="#desk"/></svg>Desktop</div>
        <div class="xp-it d-flex align-items-center"><svg><use href="#doc"/></svg>Documents</div>
        <div class="xp-it sel d-flex align-items-center"><svg><use href="#dn"/></svg>Downloads</div>
        <div class="xp-it d-flex align-items-center"><svg><use href="#note"/></svg>Music</div>
        <div class="xp-it d-flex align-items-center"><svg><use href="#pic"/></svg>Pictures</div>
        <div class="xp-it d-flex align-items-center"><svg><use href="#vid"/></svg>Videos</div>
        <div class="xp-it d-flex align-items-center"><svg><use href="#disk"/></svg>Local Disk (C:)</div>
        <div class="xp-it l1 d-flex align-items-center"><svg><use href="#lib"/></svg>Libraries</div>
        <div class="xp-it l1 d-flex align-items-center"><svg><use href="#net"/></svg>Network</div>
        <div class="xp-it l1 d-flex align-items-center"><svg><use href="#cp"/></svg>Control Panel</div>
      </div>
      <div class="xp-vs d-flex flex-column">
        <div class="xp-vs-a"><svg width="12" height="12"><use href="#chev-up"/></svg></div>
        <div class="xp-vs-t"></div>
        <div class="xp-vs-b"><svg width="12" height="12"><use href="#chev-dn"/></svg></div>
      </div>
    </div>
    <div class="xp-cnt d-flex flex-column">
      <div class="xp-hdr d-flex align-items-center"><div class="xp-hn">Name</div><div class="xp-hs d-flex align-items-center">Size</div></div>
      <div class="xp-g d-flex align-items-center"><svg width="10" height="10" viewBox="0 0 10 10"><path d="M0 2.500 5 7.500l5-5" fill="none" stroke="#8a99a8"/></svg>Today (1)</div>
      <div class="xp-row sel d-flex align-items-center"><svg width="16" height="16"><use href="#spin"/></svg><span class="n">Project.Reboot.Fix.exe</span><span class="s">18,983 KB</span></div>
      <div class="xp-g xp-gs d-flex align-items-center"><svg width="10" height="10" viewBox="0 0 10 10"><path d="M0 2.500 5 7.500l5-5" fill="none" stroke="#8a99a8"/></svg>A long time ago (7)</div>
      <div class="xp-row first d-flex align-items-center"><svg width="16" height="16"><use href="#file"/></svg><span class="n">alsoup.png</span><span class="s">3 KB</span></div>
      <div class="xp-row d-flex align-items-center"><svg width="16" height="16"><use href="#file"/></svg><span class="n">getstars.jpg</span><span class="s">30 KB</span></div>
      <div class="xp-row d-flex align-items-center"><svg width="16" height="16"><use href="#file"/></svg><span class="n">brandrss.jpg</span><span class="s">10 KB</span></div>
      <div class="xp-row d-flex align-items-center"><svg width="16" height="16"><use href="#file"/></svg><span class="n">economicbattery.jpg</span><span class="s">11 KB</span></div>
      <div class="xp-row d-flex align-items-center"><svg width="16" height="16"><use href="#file"/></svg><span class="n">enterpriserange.jpg</span><span class="s">30 KB</span></div>
      <div class="xp-row d-flex align-items-center"><svg width="16" height="16"><use href="#file"/></svg><span class="n">featurerole.png</span><span class="s">2 KB</span></div>
      <div class="xp-row d-flex align-items-center"><svg width="16" height="16"><use href="#file"/></svg><span class="n">yellowmethods.jpg</span><span class="s">17 KB</span></div>
      <div class="xp-hsb d-flex"><div class="xp-hsb-a"><svg width="12" height="12"><use href="#chev-l"/></svg></div><div class="xp-hsb-t"></div><div class="xp-hsb-b"><svg width="12" height="12"><use href="#chev-r"/></svg></div></div>
    </div>
  </div>
  <div class="xp-stat d-flex align-items-center"><span class="a">8 items</span><span class="b">1 item selected</span><span>18.5 MB</span>
    <div class="xp-views d-flex align-items-center"><span class="xp-v1"><svg width="16" height="16" viewBox="0 0 16 16"><path d="M1 2h3v3H1zM1 6.500h3v3H1zM1 11h3v3H1z" fill="none" stroke="#777" stroke-width=".8"/><path d="M6 3.500h3M11 3.500h4M6 8h3M11 8h4M6 12.500h3M11 12.500h4" stroke="#777"/></svg></span><span class="xp-v2"><svg width="14" height="14"><use href="#pic"/></svg></span></div>
  </div>
</div>

<!-- Context menu -->
<div class="dropdown-menu show ctx position-absolute">
  <a class="dropdown-item d-flex align-items-center"><span class="ctx-ic"></span><b>Open</b></a>
  <a class="dropdown-item d-flex align-items-center"><span class="ctx-ic"><svg width="16" height="16"><use href="#shield"/></svg></span>Run as administrator</a>
  <a class="dropdown-item d-flex align-items-center"><span class="ctx-ic"><svg width="16" height="16" viewBox="0 0 16 16"><rect x="1" y="1" width="14" height="14" rx="5" fill="#2fa6e6"/><text x="8" y="12" text-anchor="middle" font-size="10.500" font-weight="700" fill="#fff" font-family="Liberation Sans">S</text></svg></span>Share with Skype</a>
  <a class="dropdown-item d-flex align-items-center"><span class="ctx-ic"></span>Troubleshoot compatibility</a>
  <a class="dropdown-item d-flex align-items-center"><span class="ctx-ic"></span>Pin to Start</a>
  <a class="dropdown-item d-flex align-items-center"><span class="ctx-ic"><svg width="16" height="16" viewBox="0 0 16 16"><path d="M1 2h12v13H1z" fill="#fff" stroke="#888"/><path d="M2 6h10v8H2z" fill="#c3d468"/><path d="M10 7l5-6" stroke="#6a5a20" stroke-width="1.800"/></svg></span>Edit with Notepad++</a>
  <a class="dropdown-item d-flex align-items-center"><span class="ctx-ic"><svg width="16" height="16" viewBox="0 0 16 16"><path d="M9 1.500 15 6.500l-6 5V9C6 9 4 10 3 12c0-4 2-7 6-7.500zM1 6v9h11v-2" fill="none" stroke="#222"/></svg></span>Share</a>
  <hr class="dropdown-divider">
  <a class="dropdown-item d-flex align-items-center"><span class="ctx-ic"></span>Give access to<svg class="arr" width="8" height="14" viewBox="0 0 8 14"><path d="M1 1l6 6-6 6" fill="none" stroke="#555"/></svg></a>
  <a class="dropdown-item d-flex align-items-center"><span class="ctx-ic"><svg width="16" height="16"><use href="#rar"/></svg></span>Add to archive...</a>
  <a class="dropdown-item d-flex align-items-center"><span class="ctx-ic"><svg width="16" height="16"><use href="#rar"/></svg></span>Add to "Project.Reboot.Fix.rar"</a>
  <a class="dropdown-item d-flex align-items-center"><span class="ctx-ic"><svg width="16" height="16"><use href="#rar"/></svg></span>Compress and email...</a>
  <a class="dropdown-item d-flex align-items-center"><span class="ctx-ic"><svg width="16" height="16"><use href="#rar"/></svg></span>Compress to "Project.Reboot.Fix.rar" and email</a>
  <a class="dropdown-item d-flex align-items-center"><span class="ctx-ic"></span>Pin to taskbar</a>
  <a class="dropdown-item d-flex align-items-center"><span class="ctx-ic"></span>Restore previous versions</a>
  <hr class="dropdown-divider">
  <a class="dropdown-item d-flex align-items-center"><span class="ctx-ic"></span>Send to<svg class="arr" width="8" height="14" viewBox="0 0 8 14"><path d="M1 1l6 6-6 6" fill="none" stroke="#555"/></svg></a>
  <hr class="dropdown-divider">
  <a class="dropdown-item d-flex align-items-center"><span class="ctx-ic"></span>Cut</a>
  <a class="dropdown-item d-flex align-items-center"><span class="ctx-ic"></span>Copy</a>
  <hr class="dropdown-divider">
  <a class="dropdown-item d-flex align-items-center"><span class="ctx-ic"></span>Create shortcut</a>
  <a class="dropdown-item d-flex align-items-center"><span class="ctx-ic"></span>Delete</a>
  <a class="dropdown-item d-flex align-items-center"><span class="ctx-ic"></span>Rename</a>
  <hr class="dropdown-divider">
  <a class="dropdown-item d-flex align-items-center"><span class="ctx-ic"></span>Properties</a>
</div>

<div class="wm position-absolute"><span>ANY</span><svg width="62" height="64" viewBox="0 0 62 64"><path d="M6 4l50 28L6 60zM16 20v24l22-12z" fill="rgba(190,190,190,.35)" fill-rule="evenodd"/></svg><span class="r">RUN</span></div>

<!-- Taskbar -->
<div class="tb d-flex align-items-center">
  <div class="tb-start d-flex justify-content-center"><svg width="16" height="16" viewBox="0 0 16 16"><path d="M0 2.300 6.800 1.300V7.600H0zM7.600 1.200 16 0v7.600H7.600zM0 8.400h6.800v6.300L0 13.700zM7.600 8.400H16V16L7.600 14.800z" fill="#fff"/></svg></div>
  <div class="tb-search d-flex align-items-center"><svg width="16" height="16" viewBox="0 0 16 16"><circle cx="10" cy="6" r="5" fill="none" stroke="#222" stroke-width="1.100"/><path d="M6.300 9.700 1 15" stroke="#222" stroke-width="1.200"/></svg><span>Type here to search</span></div>
  <div class="tb-view d-flex justify-content-center"><svg width="16" height="16" viewBox="0 0 16 16"><path d="M1 4h8.500v8H1zM11.500 4h3.500M11.500 8h3.500M11.500 12h3.500M1 1.500h8.500M1 14.500h8.500" fill="none" stroke="#fff" stroke-width="1.100"/></svg></div>
  <div class="tb-app tb-a1 d-flex align-items-center justify-content-center"><svg width="26" height="26" viewBox="0 0 26 26"><defs><linearGradient id="eg" x1="0" y1="0" x2="1" y2="1"><stop offset="0" stop-color="#35c1f1"/><stop offset="1" stop-color="#0c59a4"/></linearGradient></defs><circle cx="13" cy="13" r="12.500" fill="url(#eg)"/><path d="M2 12C4 5 10 2 15 3c5 1 9 5 9 10 0 3-3 4-6 4-2 0-3-1-3-2 3-1 3-6-2-7-5-1-10 1-11 4z" fill="#6ad65d"/><path d="M13 25c-5 0-11-4-11-12 0 6 6 10 11 9 2 0 3 0 5 1-1 1-3 2-5 2z" fill="#114a8b"/></svg></div>
  <div class="tb-app tb-a2 tb-act tb-run d-flex align-items-center justify-content-center"><svg width="24" height="22" viewBox="0 0 24 22"><path d="M1 3h8l2 2h12v16H1z" fill="#f5c242"/><path d="M1 8h22v13H1z" fill="#ffd968"/><rect x="6" y="12" width="12" height="6" fill="#1d9bd8"/></svg></div>
  <div class="tb-app tb-a3 tb-run2 d-flex align-items-center justify-content-center"><svg width="26" height="26" viewBox="0 0 26 26"><defs><radialGradient id="ffg" cx=".6" cy=".3" r=".9"><stop offset="0" stop-color="#ffe14a"/><stop offset=".5" stop-color="#ff7139"/><stop offset="1" stop-color="#e31587"/></radialGradient></defs><circle cx="13" cy="14" r="11.500" fill="url(#ffg)"/><circle cx="13" cy="14" r="6" fill="#6a2bc4"/><path d="M5 5c5-4 15-3 19 5-3-2-6-2-9-2 1 2 0 4-4 5-3 1-4 4-1 6-5-1-7-5-6-9z" fill="#ff9b2c"/></svg></div>
  <div class="tb-tray d-flex align-items-center">
    <span class="tb-s"><svg width="14" height="14" viewBox="0 0 14 14"><path d="M2 9.500 7 4.500l5 5" fill="none" stroke="#fff" stroke-width="1.100"/></svg></span>
    <span class="tb-s"><svg width="16" height="18" viewBox="0 0 16 18"><rect x="3" y="5" width="8" height="8" rx="1.500" fill="none" stroke="#fff"/><path d="M11 8l3-1.500v5L11 10M4 2.500c2-1 5-1 7 0M4 15.500c2 1 5 1 7 0" fill="none" stroke="#fff" stroke-width=".9"/></svg></span>
    <span class="tb-s"><svg width="16" height="16" viewBox="0 0 16 16"><path d="M.5 1.500h5v3h10v8h-15zM8 12.500v3M4.500 15.500h7" fill="none" stroke="#fff"/></svg></span>
    <span class="tb-s"><svg width="17" height="16" viewBox="0 0 17 16"><path d="M1 5.500h3L8 2v12L4 10.500H1zM10.500 5.500c1 1.500 1 3.500 0 5M13 3.500c2 2.500 2 6.500 0 9" fill="none" stroke="#fff"/></svg></span>
    <div class="tb-clock">2:03 AM<br>5/17/2025</div>
    <div class="tb-note"><svg width="16" height="16" viewBox="0 0 16 16"><path d="M.5 1.500h15v11h-5L8 15l-2.500-2.500h-5z" fill="none" stroke="#fff"/></svg></div>
    <span class="tb-line"></span>
  </div>
</div>
<script src="https://cdn.jsdelivr.net/npm/bootstrap@5.3.0/dist/js/bootstrap.bundle.min.js"></script>
</body></html>
